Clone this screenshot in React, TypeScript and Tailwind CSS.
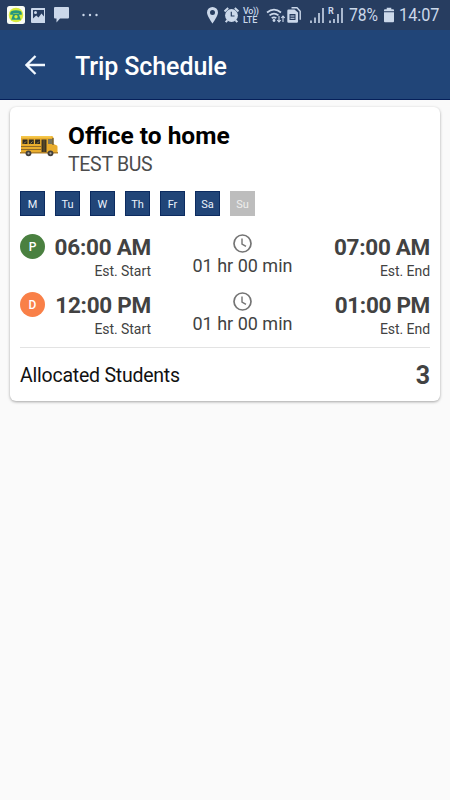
import { ReactNode } from "react";

const days = ["M", "Tu", "W", "Th", "Fr", "Sa", "Su"];

const trips = [
  { type: "P", color: "bg-[#4a8040]", start: "06:00 AM", end: "07:00 AM", duration: "01 hr 00 min" },
  { type: "D", color: "bg-[#f98048]", start: "12:00 PM", end: "01:00 PM", duration: "01 hr 00 min" },
];

function Icon({ className, box, children }: { className: string; box: string; children: ReactNode }) {
  return (
    <svg className={`block shrink-0 ${className}`} viewBox={box} fill="none">
      {children}
    </svg>
  );
}

function StatusBar() {
  return (
    <div className="flex h-[30px] items-center bg-[#273d60] pr-[10px] pl-[7px] text-[#cbd8ea]">

      {/* NOTIFICATIONS */}
      <Icon className="h-[18px] w-[18px]" box="0 0 18 18">
        <rect width="18" height="18" rx="2.5" fill="#fafdf5" />
        <circle cx="9" cy="9" r="7.3" fill="#d9ed3c" />
        <path d="M3.2 7.5Q3.2 4.2 9 4.2t5.8 3.3v1.3h-3V7.5H6.2v1.3h-3z" fill="#26967e" />
        <path d="M6.2 8h5.6l2 5.7H4.2z" fill="#26967e" />
        <circle cx="9" cy="10.8" r="1.7" fill="#d9ed3c" />
      </Icon>
      <Icon className="ml-[6px] h-[15px] w-[15px]" box="0 0 15 15">
        <path fillRule="evenodd" d="M1 0h13v15H1a1 1 0 0 1-1-1V1a1 1 0 0 1 1-1zm1 2v8.5l3.2-3 2.3 2 3-4 2.5 3V2z" fill="currentColor" />
        <circle cx="4.5" cy="4.5" r="1.5" fill="currentColor" />
      </Icon>
      <Icon className="ml-[8px] h-[16px] w-[15px]" box="0 0 15 16">
        <path d="M1 0h13a1 1 0 0 1 1 1v9.5a1 1 0 0 1-1 1H6L2.5 15.5v-4H1a1 1 0 0 1-1-1V1a1 1 0 0 1 1-1z" fill="currentColor" />
      </Icon>
      <Icon className="ml-[13px] h-[4px] w-[16px]" box="0 0 16 4">
        <circle cx="1.5" cy="2" r="1.2" fill="currentColor" />
        <circle cx="8" cy="2" r="1.2" fill="currentColor" />
        <circle cx="14.5" cy="2" r="1.2" fill="currentColor" />
      </Icon>

      {/* SYSTEM */}
      <Icon className="ml-auto h-[17px] w-[11px]" box="0 0 11 17">
        <path fillRule="evenodd" d="M5.5 0A5.5 5.5 0 0 0 0 5.5C0 9 5.5 16.5 5.5 16.5S11 9 11 5.5A5.5 5.5 0 0 0 5.5 0zm0 3a2.5 2.5 0 1 1 0 5 2.5 2.5 0 0 1 0-5z" fill="currentColor" />
      </Icon>
      <Icon className="ml-[6px] h-[16px] w-[15px]" box="0 0 15 16">
        <circle cx="7.5" cy="8.5" r="6.4" fill="currentColor" />
        <path d="M.5 4.4 4.2 1M14.5 4.4 10.8 1M3.5 13.2l-1.8 2M11.5 13.2l1.8 2" stroke="currentColor" strokeWidth="2" />
        <path d="M7.3 4.8v4.2h3.2" stroke="#273d60" strokeWidth="1.2" />
      </Icon>
      <div className="ml-[4px] w-[17px] font-medium">
        <div className="h-[8px] text-[9px] leading-[8px] tracking-[-0.4px] whitespace-nowrap">Vo))</div>
        <div className="mt-[1px] h-[8px] text-[9px] leading-[8px]">LTE</div>
      </div>
      <Icon className="ml-[6px] h-[15px] w-[19px]" box="0 0 19 15">
        <path d="M1 4.5Q8 -1.2 15 4.5M3.5 7.4Q8 3.7 12.5 7.4M5.7 10.2Q8 8.4 10.3 10.2" stroke="currentColor" strokeWidth="1.7" />
        <circle cx="8" cy="12.5" r="1.4" fill="currentColor" />
        <path d="M13 8v6M11.2 12l1.8 2 1.8-2M17 14V8M15.3 10 17 8l1.7 2" stroke="currentColor" strokeWidth="1.1" />
      </Icon>
      <Icon className="ml-[2px] h-[16px] w-[14px]" box="0 0 14 16">
        <path d="M4.5.8H10l3.2 3.5v8.5" stroke="currentColor" strokeWidth="1.4" />
        <path fillRule="evenodd" d="M1.5 2.5h6l3.5 3v9a1.2 1.2 0 0 1-1.2 1.2H1.5A1.2 1.2 0 0 1 .3 14.5V3.7A1.2 1.2 0 0 1 1.5 2.5zM2.5 7v6h6V7z" fill="currentColor" />
        <path d="M3.5 9h4M3.5 11.3h4" stroke="currentColor" strokeWidth="1" />
      </Icon>
      <Icon className="ml-[9px] h-[15px] w-[14px]" box="0 0 14 15">
        <path d="M1 15v-2.5M5 15V9.5M9 15V5M13 15V0" stroke="currentColor" strokeWidth="1.6" />
      </Icon>
      <div className="relative ml-[4px]">
        <span className="absolute -top-[1px] left-0 text-[9px] leading-[9px] font-bold">R</span>
        <Icon className="h-[15px] w-[15px]" box="0 0 15 15">
          <path d="M2 15v-2.5M6 15v-4M10 15V6M14 15V0" stroke="currentColor" strokeWidth="1.6" />
        </Icon>
      </div>
      <span className="ml-[6px] w-[31px] text-[19px] leading-[20px]">
        <span className="inline-block origin-left scale-x-[0.825]">78%</span>
      </span>
      <Icon className="ml-[4px] h-[16px] w-[10px]" box="0 0 11 16">
        <path d="M3 0h5v1.8h2a1 1 0 0 1 1 1V4H0V2.8a1 1 0 0 1 1-1h2zM0 5h11v10a1 1 0 0 1-1 1H1a1 1 0 0 1-1-1z" fill="currentColor" />
      </Icon>
      <span className="ml-[5px] w-[41px] text-[19px] leading-[20px]">
        <span className="inline-block origin-left scale-x-[0.855]">14:07</span>
      </span>
    </div>
  );
}

function Bus() {
  return (
    <Icon className="mt-[17px] h-[22px] w-[38px]" box="0 0 38 22">
      <path d="M1 1h30.5q2 0 2 2v6l3 1.2q1 .4 1 1.6V18H1z" fill="#e9ad2d" />
      <path d="M1 1h30.5v1.8H1z" fill="#f4c64a" />
      <path d="M2.5 4.5h5V9h-5zM8.8 4.5h5V9h-5zM15.1 4.5h5V9h-5z" fill="#302b20" />
      <path d="m4 8.500 2-2M10.500 8.500l2-2M17 8.500l2-2" stroke="#bfa65c" strokeWidth=".8" />
      <path d="M21.5 4.5h5V18h-5z" fill="#3d3524" />
      <path d="M24 5v12" stroke="#8b702c" strokeWidth=".6" />
      <path d="M28 4h4.5v5H28z" fill="#77745f" />
      <path d="M33 3v7" stroke="#3c3a35" strokeWidth="1" />
      <path d="M1 11.5h20M1 14.5h20" stroke="#75592a" strokeWidth=".8" />
      <path d="M0 17h38v1.5H0z" fill="#b48228" />
      <circle cx="8.5" cy="18.3" r="2.9" fill="#403e3c" />
      <circle cx="8.5" cy="18.3" r="1.1" fill="#aaa69e" />
      <circle cx="30.5" cy="18.3" r="2.9" fill="#403e3c" />
      <circle cx="30.5" cy="18.3" r="1.1" fill="#aaa69e" />
    </Icon>
  );
}

export default function App() {
  return (
    <main className="min-h-screen w-full bg-[#fafafa] font-[Roboto,sans-serif]">
      <StatusBar />

      {/* HEADER */}
      <header className="flex h-[70px] items-center border-b border-[#06205a] bg-[#214578] pl-[25px] text-white">
        <Icon className="h-[20px] w-[20px]" box="0 0 20 20">
          <path d="M20 10H2M10.5 1 1.5 10l9 9" stroke="#f1f8ff" strokeWidth="2.3" />
        </Icon>
        <h1 className="ml-[30px] pt-[4px] text-[25px] leading-[30px] font-medium tracking-[-0.1px]">Trip Schedule</h1>
      </header>

      {/* TRIP CARD */}
      <section className="mx-[10px] mt-[7px] h-[294px] rounded-[6px] bg-white px-[10px] pt-[11px] shadow-[0_1px_3px_rgba(0,0,0,0.35)]">
        <div className="flex h-[73px]">
          <Bus />
          <div className="ml-[10px] pt-[3px]">
            <h2 className="text-[24.5px] leading-[30px] font-bold text-black">Office to home</h2>
            <p className="text-[19.5px] leading-[28px] tracking-[-0.3px] text-[#4c4c4c]">TEST BUS</p>
          </div>
        </div>

        {/* DAYS */}
        <div className="flex gap-[10px]">
          {days.map((day) => (
            <span
              key={day}
              className={`flex h-[25px] w-[25px] items-center justify-center border pt-px text-[11px] leading-[13px] ${
                day === "Su" ? "border-[#bdbdbd] bg-[#bdbdbd] text-[#eeeeee]" : "border-[#0c2b60] bg-[#214578] text-[#eaf2fc]"
              }`}
            >
              {day}
            </span>
          ))}
        </div>

        {/* TIMES */}
        <div className="mt-[17px] text-[#424242]">
          {trips.map((trip) => (
            <div key={trip.type} className="flex h-[58px]">
              <span className={`mt-px flex h-[25px] w-[25px] items-center justify-center rounded-full text-[12px] font-medium text-white ${trip.color}`}>
                {trip.type}
              </span>
              <div className="w-[106px] pt-px text-right whitespace-nowrap">
                <div className="text-[22.5px] leading-[26px] font-bold tracking-[-0.25px]">{trip.start}</div>
                <div className="mt-px text-[14px] leading-[20px] tracking-[-0.05px]">Est. Start</div>
              </div>
              <div className="flex flex-1 flex-col items-center pt-px">
                <Icon className="h-[19px] w-[19px]" box="0 0 19 19">
                  <circle cx="9.5" cy="9.5" r="8.5" stroke="#747474" strokeWidth="1.7" />
                  <path d="M9 4.5V10l4 2.4" stroke="#747474" strokeWidth="1.4" />
                </Icon>
                <div className="mt-px text-[18px] leading-[24px]">{trip.duration}</div>
              </div>
              <div className="w-[96px] pt-px text-right whitespace-nowrap">
                <div className="text-[22.5px] leading-[26px] font-bold tracking-[-0.3px]">{trip.end}</div>
                <div className="mt-px text-[14px] leading-[20px] tracking-[-0.05px]">Est. End</div>
              </div>
            </div>
          ))}
        </div>

        {/* STUDENTS */}
        <div className="-mt-[2px] flex h-[57px] items-center justify-between border-t border-[#e3e3e3]">
          <span className="text-[19.5px] tracking-[-0.23px] text-[#111111]">Allocated Students</span>
          <span className="text-[25px] font-bold text-[#424242]">3</span>
        </div>
      </section>
    </main>
  );
}
